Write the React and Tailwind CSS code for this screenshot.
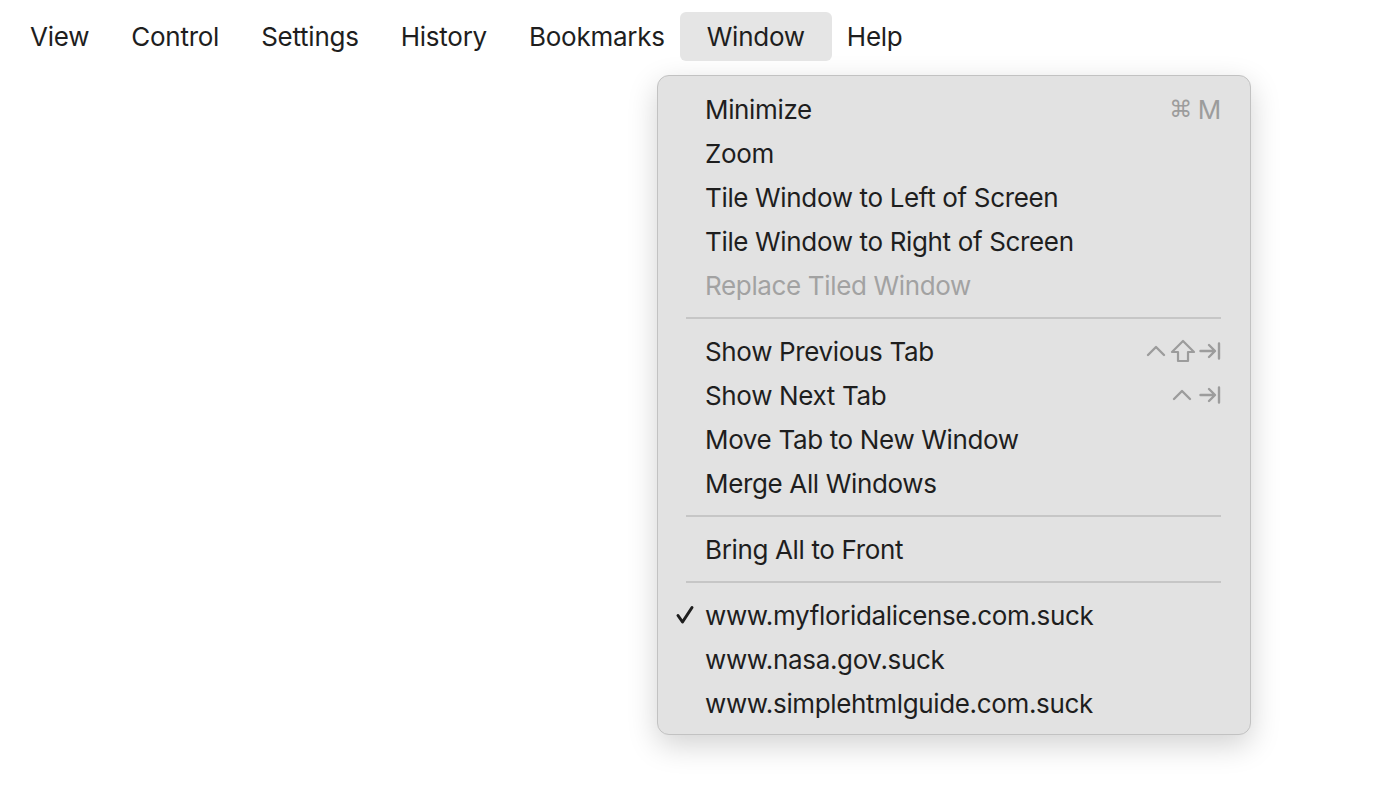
import React from 'react';

const font = { fontFamily: 'Inter, "Noto Sans", sans-serif' };

const Caret = () => (
  <svg width="22" height="16" viewBox="0 0 22 16" fill="none" stroke="currentColor" strokeWidth="2.4" strokeLinecap="round" strokeLinejoin="round">
    <path d="M3 12 L11 4 L19 12" />
  </svg>
);

const Shift = () => (
  <svg width="26" height="24" viewBox="0 0 26 24" fill="none" stroke="currentColor" strokeWidth="2.2" strokeLinejoin="round">
    <path d="M13 2 L24 13 H18 V22 H8 V13 H2 Z" />
  </svg>
);

const TabKey = () => (
  <svg width="22" height="20" viewBox="0 0 22 20" fill="none" stroke="currentColor" strokeWidth="2.4" strokeLinecap="round" strokeLinejoin="round">
    <path d="M1.5 10 H15.5 M10 4 L16 10 L10 16 M20 2.5 V17.5" />
  </svg>
);

const Check = () => (
  <svg width="20" height="20" viewBox="0 0 20 20" fill="none" stroke="currentColor" strokeWidth="3" strokeLinecap="round" strokeLinejoin="round">
    <path d="M3 10.5 L7.5 17 L17 2.5" />
  </svg>
);

const menuBar = ['View', 'Control', 'Settings', 'History', 'Bookmarks', 'Window', 'Help'];

const groups = [
  [
    { label: 'Minimize', shortcut: 'cmdM' },
    { label: 'Zoom' },
    { label: 'Tile Window to Left of Screen' },
    { label: 'Tile Window to Right of Screen' },
    { label: 'Replace Tiled Window', disabled: true },
  ],
  [
    { label: 'Show Previous Tab', shortcut: 'prev' },
    { label: 'Show Next Tab', shortcut: 'next' },
    { label: 'Move Tab to New Window' },
    { label: 'Merge All Windows' },
  ],
  [{ label: 'Bring All to Front' }],
  [
    { label: 'www.myfloridalicense.com.suck', checked: true },
    { label: 'www.nasa.gov.suck' },
    { label: 'www.simplehtmlguide.com.suck' },
  ],
];

function Shortcut({ kind }) {
  if (kind === 'cmdM') {
    return (
      <span className="flex items-center gap-[6px] text-[26px] text-[#9c9c9c]">
        <span style={{ fontFamily: '"DejaVu Sans", sans-serif' }} className="text-[23px]">⌘</span>
        <span>M</span>
      </span>
    );
  }
  if (kind === 'prev') {
    return (
      <span className="flex items-center gap-[3px] text-[#9c9c9c]">
        <Caret />
        <Shift />
        <TabKey />
      </span>
    );
  }
  if (kind === 'next') {
    return (
      <span className="flex items-center gap-[6px] text-[#9c9c9c]">
        <Caret />
        <TabKey />
      </span>
    );
  }
  return null;
}

function MenuItem({ item }) {
  return (
    <div className="flex h-[44px] items-center">
      <div className="flex w-[47px] justify-end pr-[10px] text-[#1e1e1e]">
        {item.checked && <Check />}
      </div>
      <span className={item.disabled ? 'flex-1 text-[#a2a2a2]' : 'flex-1 text-[#1e1e1e]'}>{item.label}</span>
      {item.shortcut && <Shortcut kind={item.shortcut} />}
    </div>
  );
}

export default function App() {
  return (
    <div className="min-h-[800px] w-[1400px] bg-white text-[26px] tracking-[-0.35px]" style={font}>
      <div className="flex items-center pl-[9px] pt-[12px] tracking-[-0.25px]">
        {menuBar.map((name) =>
          name === 'Window' ? (
            <div key={name} className="mx-[-6px] flex h-[49px] items-center rounded-[6px] bg-[#e5e5e5] px-[27px] text-[#1e1e1e]">
              {name}
            </div>
          ) : (
            <div key={name} className="flex h-[49px] items-center px-[21px] text-[#1e1e1e]">
              {name}
            </div>
          )
        )}
      </div>

      <div className="ml-[657px] mt-[14px] w-[594px] rounded-[12px] border border-[#c2c2c2] bg-[#e2e2e2] pb-[9px] pr-[29px] pt-[11px] shadow-[0_10px_30px_rgba(0,0,0,0.18)]">
        {groups.map((group, gi) => (
          <div key={gi}>
            {gi > 0 && (
              <div className="flex h-[22px] items-center pl-[28px]">
                <div className="h-[2px] w-full bg-[#c6c6c6]" />
              </div>
            )}
            {group.map((item) => (
              <MenuItem key={item.label} item={item} />
            ))}
          </div>
        ))}
      </div>
    </div>
  );
}
